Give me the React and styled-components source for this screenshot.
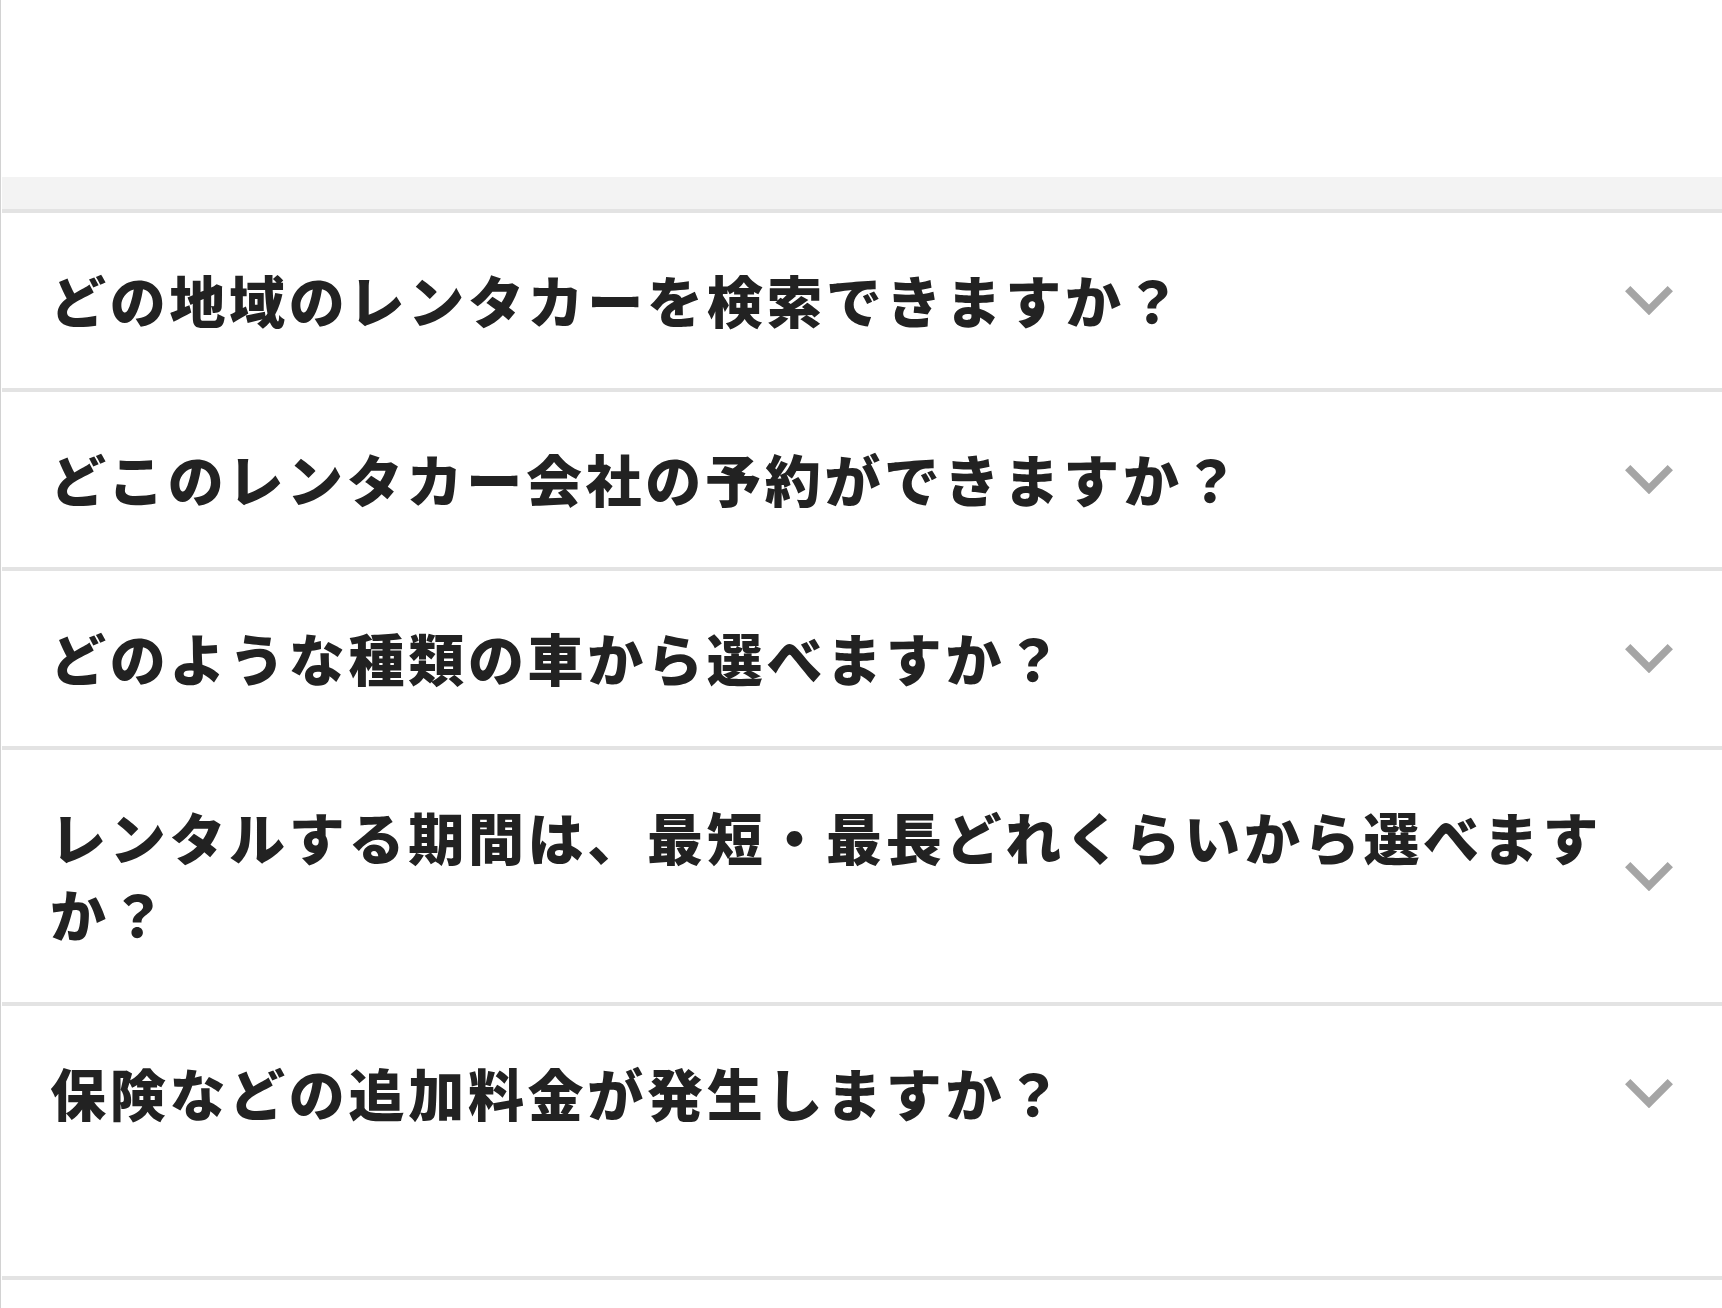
import React from "react";
import styled, { createGlobalStyle } from "styled-components";

const GlobalStyle = createGlobalStyle`
    html, body {
        margin: 0;
        padding: 0;
        background: #ffffff;
    }
    body {
        font-family: "Noto Sans CJK JP", "Noto Sans", sans-serif;
        color: #222222;
    }
`;

const Page = styled.div`
    min-height: 100vh;
    border-left: 1px solid #d2d2d2;
    padding-left: 1px;
    box-sizing: border-box;
`;

const TopSpace = styled.div`
    height: 177px;
`;

const SectionBand = styled.div`
    height: 32px;
    background-color: #f3f3f3;
    border-bottom: 4px solid #e3e3e3;
`;

const FaqList = styled.ul`
    list-style: none;
    margin: 0;
    padding: 0;
`;

const FaqItem = styled.li`
    border-bottom: 4px solid #e3e3e3;
    padding-bottom: ${(p) => (p.$last ? "95px" : "0")};
`;

const Question = styled.button`
    width: 100%;
    display: flex;
    align-items: center;
    gap: 15px;
    padding: 47px 49px 51px 48px;
    border: none;
    background: transparent;
    text-align: left;
    cursor: pointer;
    font-family: inherit;
    color: inherit;
    box-sizing: border-box;
`;

const QuestionText = styled.span`
    flex: 1;
    font-size: 56px;
    font-weight: 900;
    line-height: 77px;
    letter-spacing: 3.7px;
    color: #222222;
`;

const Chevron = styled.svg`
    flex-shrink: 0;
    width: 48px;
    height: 29px;
    margin-top: 4px;
`;

const questions = [
    "どの地域のレンタカーを検索できますか？",
    "どこのレンタカー会社の予約ができますか？",
    "どのような種類の車から選べますか？",
    "レンタルする期間は、最短・最長どれくらいから選べますか？",
    "保険などの追加料金が発生しますか？",
];

const ChevronIcon = () => (
    <Chevron viewBox="0 0 48 29" aria-hidden="true">
        <polyline
            points="2.7,2.7 24,24 45.3,2.7"
            fill="none"
            stroke="#a5a5a5"
            strokeWidth="7.5"
            strokeLinecap="butt"
            strokeLinejoin="miter"
        />
    </Chevron>
);

const App = () => {
    return (
        <Page>
            <GlobalStyle />
            <TopSpace />
            <SectionBand />
            <FaqList>
                {questions.map((q, i) => (
                    <FaqItem key={q} $last={i === questions.length - 1}>
                        <Question type="button">
                            <QuestionText>{q}</QuestionText>
                            <ChevronIcon />
                        </Question>
                    </FaqItem>
                ))}
            </FaqList>
        </Page>
    );
};

export default App;
